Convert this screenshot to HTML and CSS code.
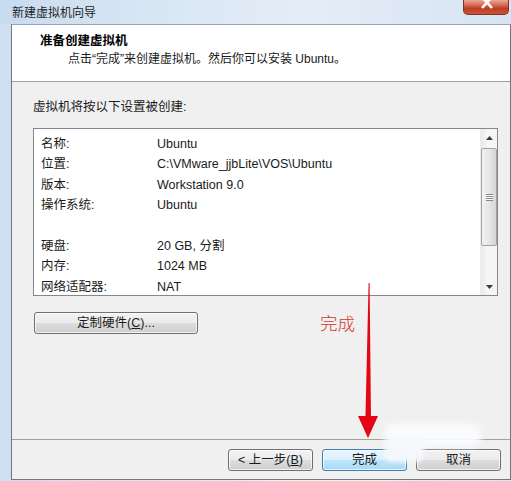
FILE: index.html
```html
<!DOCTYPE html>
<html lang="zh-CN">
<head>
<meta charset="utf-8">
<title>新建虚拟机向导</title>
<link rel="stylesheet" href="styles.css">
</head>
<body>
<div class="window">
  <div class="titlebar">
    <span class="title">新建虚拟机向导</span>
    <div class="close">
      <svg class="close-x" width="14" height="10" viewBox="0 0 14 10"><path d="M2 -3 L12 8 M12 -3 L2 8" stroke="#ffffff" stroke-width="2.6" fill="none"/></svg>
    </div>
  </div>
  <div class="frame">
    <div class="client">
      <div class="header">
        <div class="h-title">准备创建虚拟机</div>
        <div class="h-sub">点击“完成”来创建虚拟机。然后你可以安装 Ubuntu。</div>
      </div>
      <div class="content">
        <div class="intro">虚拟机将按以下设置被创建:</div>
        <div class="listbox">
          <div class="rows">
            <div class="row"><span class="label">名称:</span><span class="value">Ubuntu</span></div>
            <div class="row"><span class="label">位置:</span><span class="value">C:\VMware_jjbLite\VOS\Ubuntu</span></div>
            <div class="row"><span class="label">版本:</span><span class="value">Workstation 9.0</span></div>
            <div class="row"><span class="label">操作系统:</span><span class="value">Ubuntu</span></div>
            <div class="row"><span class="label"></span><span class="value"></span></div>
            <div class="row"><span class="label">硬盘:</span><span class="value">20 GB, 分割</span></div>
            <div class="row"><span class="label">内存:</span><span class="value">1024 MB</span></div>
            <div class="row"><span class="label">网络适配器:</span><span class="value">NAT</span></div>
          </div>
          <div class="scrollbar">
            <div class="sb-btn"><svg width="7" height="4" viewBox="0 0 7 4"><path d="M0 4 L3.5 0 L7 4 Z" fill="#3a3a3a"/></svg></div>
            <div class="sb-track">
              <div class="thumb"><span class="grip"></span></div>
            </div>
            <div class="sb-btn"><svg width="7" height="4" viewBox="0 0 7 4"><path d="M0 0 L3.5 4 L7 0 Z" fill="#3a3a3a"/></svg></div>
          </div>
        </div>
        <button class="btn custom">定制硬件(<u>C</u>)...</button>
      </div>
      <div class="footer">
        <button class="btn">&lt; 上一步(<u>B</u>)</button>
        <button class="btn default">完成</button>
        <button class="btn">取消</button>
      </div>
    </div>
  </div>
  <div class="annot-text">完成</div>
  <svg class="arrow" width="511" height="481" viewBox="0 0 511 481">
    <path d="M368.6 283 L369.6 283 L371 419 L365.4 419 Z" fill="#e30613"/>
    <path d="M358 416 L378 416 L368 438 Z" fill="#e30613"/>
  </svg>
  <div class="smudge"></div>
  <div class="smudge2"></div>
</div>
</body>
</html>
```

FILE: styles.css
```css
* { box-sizing: border-box; }
html, body { margin: 0; padding: 0; }
body {
  width: 511px;
  height: 481px;
  overflow: hidden;
  background: #e4ecf5;
  font-family: "Liberation Sans", "Noto Sans CJK SC", sans-serif;
  font-size: 12.5px;
  color: #1a1a1a;
}
.window {
  position: relative;
  width: 511px;
  height: 481px;
  display: flex;
  flex-direction: column;
  background: linear-gradient(to right, #cfdef0 0%, #dfe9f5 35%, #ecf2f9 65%, #dbe7f4 100%);
}
.titlebar {
  height: 24px;
  display: flex;
  align-items: flex-start;
  padding-left: 12px;
  background: linear-gradient(to right, #c8dbef 0%, #d8e6f4 30%, #e4edf7 60%, #d6e4f3 100%);
}
.title {
  line-height: 23px;
  font-size: 12px;
  font-family: "Noto Sans CJK SC", sans-serif;
  color: #1e1e1e;
}
.close {
  margin-left: auto;
  margin-right: 2px;
  width: 46px;
  height: 15px;
  border: 1px solid #7a3326;
  border-top: none;
  border-radius: 0 0 5px 5px;
  background: linear-gradient(#e8a898, #d4644c 40%, #bd3c24 60%, #c95535);
  display: flex;
  justify-content: center;
  overflow: hidden;
}
.close-x { display: block; margin-left: 2px; }
.frame {
  flex: 1;
  display: flex;
  padding: 0 1px 1px 11px;
}
.client {
  flex: 1;
  display: flex;
  flex-direction: column;
  border: 1px solid #6f7783;
  border-top-color: #9aa6b4;
  background: #f0f0f0;
}
.header {
  height: 57px;
  background: #ffffff;
  border-bottom: 1px solid #a0a0a0;
  padding-top: 7px;
}
.h-title {
  padding-left: 28px;
  line-height: 16px;
  font-weight: bold;
  font-size: 12.5px;
  font-family: "Noto Sans CJK SC", sans-serif;
  color: #000;
}
.h-sub {
  margin-top: 3px;
  padding-left: 56px;
  line-height: 16px;
  font-size: 12px;
  color: #1a1a1a;
}
.content {
  flex: 1;
  padding: 17px 12px 0 21px;
  display: flex;
  flex-direction: column;
  align-items: flex-start;
}
.intro {
  line-height: 16px;
  font-size: 12.5px;
  color: #1a1a1a;
}
.listbox {
  margin-top: 13px;
  width: 465px;
  height: 168px;
  border: 1px solid #828790;
  background: #ffffff;
  display: flex;
}
.rows {
  flex: 1;
  overflow: hidden;
  padding: 5px 0 0 7px;
}
.row {
  display: flex;
  height: 20.4px;
  line-height: 20.4px;
  white-space: nowrap;
}
.label { width: 116px; flex: none; }
.value { flex: 1; }
.scrollbar {
  width: 17px;
  flex: none;
  display: flex;
  flex-direction: column;
  background: linear-gradient(to right, #e9e9e9, #f6f6f6 40%, #f4f4f4);
  border-left: 1px solid #ececec;
}
.sb-btn {
  height: 17px;
  display: flex;
  align-items: center;
  justify-content: center;
}
.sb-track {
  flex: 1;
  padding: 2px 0 0 0;
}
.thumb {
  height: 98px;
  border: 1px solid #a3a3a3;
  border-radius: 2px;
  background: linear-gradient(to right, #f2f2f2, #e6e6e6 50%, #d6d6d6);
  display: flex;
  align-items: center;
  justify-content: center;
}
.grip {
  display: block;
  width: 7px;
  height: 7px;
  background: repeating-linear-gradient(to bottom, #8a8a8a 0 1px, #f7f7f7 1px 2px);
}
.btn {
  height: 22px;
  width: 85px;
  padding: 0;
  border: 1px solid #707070;
  border-radius: 3px;
  background: linear-gradient(#f2f2f2 0%, #ebebeb 50%, #dddddd 51%, #cfcfcf 100%);
  font-family: "Liberation Sans", "Noto Sans CJK SC", sans-serif;
  font-size: 12.5px;
  color: #1a1a1a;
  line-height: 20px;
  box-shadow: inset 0 0 0 1px rgba(255,255,255,0.7);
}
.btn u { text-decoration: underline; }
.custom {
  margin-top: 16px;
  margin-left: 1px;
  width: 164px;
}
.footer {
  height: 40px;
  border-top: 1px solid #a0a0a0;
  display: flex;
  justify-content: flex-end;
  gap: 9px;
  padding: 9px 9px 0 0;
}
.default {
  border-color: #3c7fb1;
  background: linear-gradient(#eaf6fd 0%, #d9f0fc 50%, #bee6fd 51%, #a7d9f5 100%);
}
.annot-text {
  position: absolute;
  left: 320px;
  top: 313px;
  font-family: "Noto Sans CJK SC", sans-serif;
  font-size: 17.5px;
  line-height: 20px;
  font-weight: 300;
  color: #d4372c;
}
.arrow {
  position: absolute;
  left: 0;
  top: 0;
  pointer-events: none;
}
.smudge {
  position: absolute;
  left: 384px;
  top: 423px;
  width: 98px;
  height: 24px;
  border-radius: 12px;
  background: rgba(250, 251, 253, 0.95);
  filter: blur(3px);
}
.smudge2 {
  position: absolute;
  left: 384px;
  top: 438px;
  width: 40px;
  height: 24px;
  border-radius: 8px;
  background: rgba(244, 248, 252, 0.95);
  filter: blur(2px);
}
```
